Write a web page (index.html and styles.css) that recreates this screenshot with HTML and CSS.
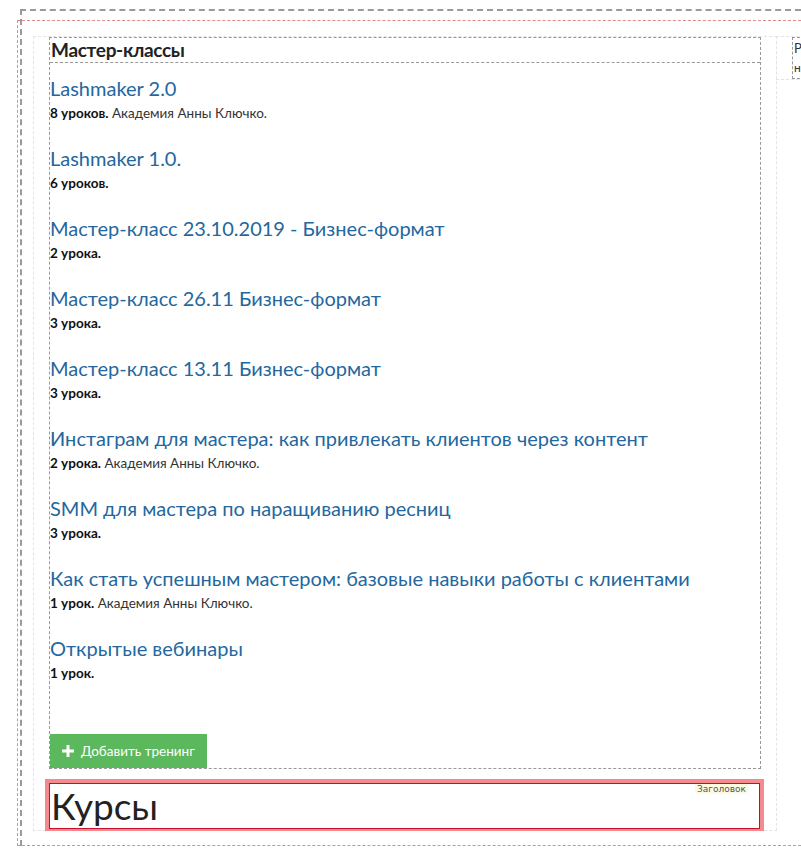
FILE: index.html
```html
<!DOCTYPE html>
<html lang="ru">
<head>
    <meta charset="UTF-8">
    <meta name="viewport" content="width=device-width, initial-scale=1.0">
    <title>Мастер-классы</title>
    <link rel="stylesheet" href="styles.css">
</head>
<body>
    <div class="frame">
        <div class="region">
            <div class="row">
                <div class="col col-main">
                    <div class="block">
                        <h2 class="block-title">Мастер-классы</h2>
                        <ul class="trainings">
                            <li class="training">
                                <a class="training-name" href="#">Lashmaker 2.0</a>
                                <p class="training-meta"><b>8 уроков.</b> Академия Анны Ключко.</p>
                            </li>
                            <li class="training">
                                <a class="training-name" href="#">Lashmaker 1.0.</a>
                                <p class="training-meta"><b>6 уроков.</b></p>
                            </li>
                            <li class="training">
                                <a class="training-name" href="#">Мастер-класс 23.10.2019 - Бизнес-формат</a>
                                <p class="training-meta"><b>2 урока.</b></p>
                            </li>
                            <li class="training">
                                <a class="training-name" href="#">Мастер-класс 26.11 Бизнес-формат</a>
                                <p class="training-meta"><b>3 урока.</b></p>
                            </li>
                            <li class="training">
                                <a class="training-name" href="#">Мастер-класс 13.11 Бизнес-формат</a>
                                <p class="training-meta"><b>3 урока.</b></p>
                            </li>
                            <li class="training">
                                <a class="training-name" href="#">Инстаграм для мастера: как привлекать клиентов через контент</a>
                                <p class="training-meta"><b>2 урока.</b> Академия Анны Ключко.</p>
                            </li>
                            <li class="training">
                                <a class="training-name" href="#">SMM для мастера по наращиванию ресниц</a>
                                <p class="training-meta"><b>3 урока.</b></p>
                            </li>
                            <li class="training">
                                <a class="training-name" href="#">Как стать успешным мастером: базовые навыки работы с клиентами</a>
                                <p class="training-meta"><b>1 урок.</b> Академия Анны Ключко.</p>
                            </li>
                            <li class="training">
                                <a class="training-name" href="#">Открытые вебинары</a>
                                <p class="training-meta"><b>1 урок.</b></p>
                            </li>
                        </ul>
                        <button class="btn-add">
                            <svg class="icon-plus" viewBox="0 0 12 12" width="12" height="12"><path d="M4.5 0h3v4.5H12v3H7.5V12h-3V7.5H0v-3h4.5z" fill="#fff"/></svg>
                            Добавить тренинг
                        </button>
                    </div>
                    <div class="heading-edit">
                        <h1 class="heading-text">Курсы</h1>
                        <span class="hint">Заголовок</span>
                    </div>
                </div>
                <div class="col col-side">
                    <div class="side-box">
                        <div class="side-title">Р</div>
                        <div class="side-text">н</div>
                    </div>
                </div>
            </div>
        </div>
    </div>
</body>
</html>
```

FILE: styles.css
```css
html, body {
    overflow: hidden;
}

body {
    margin: 0;
    padding: 0;
    background-color: #fff;
    font-family: Lato, "Open Sans", sans-serif;
    color: #222;
}

.frame {
    margin: 9px 0 0 20px;
    border-top: 2px dashed #9a9a9a;
    border-left: 2px dashed #9a9a9a;
    padding-bottom: 10px;
}

.region {
    margin: 9px 0 0 -5px;
    border: 1px dashed #e38b8b;
    border-right: none;
    padding: 15px 0 14px 15px;
}

.row {
    display: flex;
    align-items: flex-start;
    overflow: hidden;
}

.col {
    box-sizing: border-box;
    border: 1px dashed #e4e4e4;
    padding: 0 15px;
}

.col-main {
    flex: 0 0 744px;
    padding-bottom: 1px;
}

.col-side {
    flex: 0 0 300px;
    margin-left: -1px;
}

.block {
    border: 1px dashed #999;
}

.block-title {
    margin: 0;
    padding-left: 1px;
    font-size: 19px;
    line-height: 24px;
    font-weight: bold;
    letter-spacing: -0.3px;
    color: #222;
    border-bottom: 1px dashed #999;
}

.trainings {
    list-style: none;
    margin: 0;
    padding: 12px 0 0 0;
}

.training {
    margin-bottom: 23px;
}

.training-name {
    display: block;
    font-size: 20px;
    line-height: 26px;
    color: #23679e;
    text-decoration: none;
    margin-bottom: 3px;
}

.training-meta {
    margin: 0;
    font-size: 13.5px;
    line-height: 18px;
    color: #333;
}

.training-meta b {
    color: #111;
}

.btn-add {
    display: flex;
    align-items: center;
    gap: 7px;
    margin-top: 52px;
    height: 34px;
    padding: 0 12px;
    border: none;
    background-color: #5cb85c;
    color: #fff;
    font-family: inherit;
    font-size: 13.5px;
    cursor: pointer;
}

.heading-edit {
    position: relative;
    margin: 14px 1px 0 0;
    border: 1px solid #c4102a;
    box-shadow: 0 0 0 4px #f58990;
}

.heading-text {
    margin: 0;
    padding-left: 1px;
    font-size: 37px;
    line-height: 44px;
    font-weight: normal;
    color: #222;
}

.hint {
    position: absolute;
    top: 0;
    right: 11px;
    padding: 0 2px;
    background-color: #fffbe0;
    color: #555;
    font-family: "DejaVu Sans", sans-serif;
    font-size: 9px;
    line-height: 10px;
}

.side-box {
    border: 1px dashed #999;
    padding-left: 1px;
}

.side-title {
    font-size: 13px;
    line-height: 20px;
    color: #333;
}

.side-text {
    font-size: 12px;
    line-height: 20px;
    color: #333;
}
```
